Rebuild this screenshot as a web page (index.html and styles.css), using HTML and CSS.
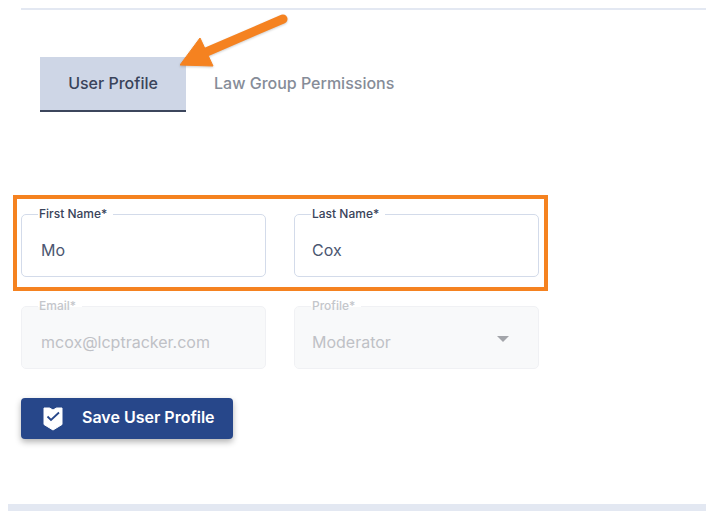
FILE: index.html
```html
<!DOCTYPE html>
<html lang="en">
<head>
  <meta charset="UTF-8" />
  <meta name="viewport" content="width=device-width, initial-scale=1.0" />
  <title>User Profile</title>
  <link rel="stylesheet" href="styles.css">
</head>
<body>
  <div class="page">
    <hr class="top-rule" />

    <nav class="tabs">
      <a class="tab active" href="#">User Profile</a>
      <a class="tab" href="#">Law Group Permissions</a>
    </nav>

    <form class="profile-form">
      <div class="form-row">
        <fieldset class="field">
          <legend>First Name*</legend>
          <input type="text" value="Mo" />
        </fieldset>
        <fieldset class="field">
          <legend>Last Name*</legend>
          <input type="text" value="Cox" />
        </fieldset>
      </div>
      <div class="form-row">
        <fieldset class="field disabled">
          <legend>Email*</legend>
          <input type="text" value="mcox@lcptracker.com" disabled />
        </fieldset>
        <fieldset class="field disabled">
          <legend>Profile*</legend>
          <div class="select-value">
            <span>Moderator</span>
            <i class="caret"></i>
          </div>
        </fieldset>
      </div>
      <button class="save-btn" type="button">
        <svg class="shield" width="20" height="24" viewBox="0 0 20 24">
          <path d="M1 1 H6.5 L10 3 L13.5 1 H19 V17.5 L10 23 L1 17.5 Z" fill="#fff" stroke="#fff" stroke-width="1" stroke-linejoin="round" />
          <path d="M4.5 9.5 L8 13 L16 5.5" fill="none" stroke="#27478a" stroke-width="1.8" />
        </svg>
        <span class="save-label">Save User Profile</span>
      </button>
    </form>

    <div class="bottom-bar"></div>

    <!-- annotations drawn on top of the screenshot -->
    <div class="highlight-box"></div>
    <svg class="arrow" width="112" height="62" viewBox="0 0 112 62">
      <path d="M103 8 L24 42" fill="none" stroke="#f58220" stroke-width="9" stroke-linecap="round" />
      <path d="M20 27 L0 54 L33 55 Z" fill="#f58220" stroke="#f58220" stroke-width="1" stroke-linejoin="round" />
    </svg>
  </div>
</body>
</html>
```

FILE: styles.css
```css
* { box-sizing: border-box; margin: 0; padding: 0; }
body { font-family: 'Inter', 'Liberation Sans', sans-serif; background-color: #fff; color: #3d4759; }

.page {
  position: relative;
  width: 717px; height: 519px;
  padding-top: 8px;
  overflow: hidden;
}
.top-rule {
  border: none; height: 2px;
  margin: 0 11px 0 21px;
  background-color: #e3e8f2;
}

.tabs {
  display: flex;
  margin: 47px 0 0 40px;
}
.tab {
  height: 55px;
  padding-bottom: 3px;
  display: flex; align-items: center;
  font-size: 16px; font-weight: 500;
  color: #868c98; text-decoration: none;
}
.tab.active {
  width: 146px; margin-right: 28px;
  padding-bottom: 1px;
  justify-content: center;
  background-color: #ced6e6;
  border-bottom: 2px solid #3c465c;
  color: #39435a;
}

.profile-form {
  display: flex; flex-direction: column;
  gap: 29px;
  margin: 102px 0 0 21px;
}
.form-row {
  display: flex; gap: 28px;
}
.field {
  width: 245px; height: 70px;
  margin-top: -7px;
  padding: 0 17px;
  border: 1.5px solid #d3dbea;
  border-radius: 5px;
  background-color: #fff;
}
.field legend {
  margin-left: -1px;
  padding: 0 6px 0 1px;
  font-size: 12px; line-height: 14px;
  font-weight: 500;
  color: #39435a;
}
.field input {
  display: block;
  width: 100%; height: 56px;
  padding: 1px 0 0 0;
  border: none; outline: none;
  background: transparent;
  font: inherit; font-size: 16px;
  color: #4b5670;
}
.field:first-child input { padding-left: 2px; }
.field.disabled {
  background-color: #f8f9fa;
  border-color: #f0f1f4;
  background-clip: padding-box;
}
.field.disabled legend { color: #c4c6cb; }
.field.disabled input { color: #bfc1c6; }

.select-value {
  height: 56px;
  padding: 1px 0 0 0;
  display: flex; align-items: center; justify-content: space-between;
  font-size: 16px;
  color: #bfc1c6;
}
.caret {
  width: 0; height: 0;
  margin: 0 12px 5px 0;
  border-left: 6px solid transparent;
  border-right: 6px solid transparent;
  border-top: 6px solid #a3a5aa;
}

.save-btn {
  width: 212px; height: 41px;
  display: flex; align-items: center;
  gap: 19px;
  padding-left: 22px;
  border: none; border-radius: 4px;
  background-color: #27478a;
  box-shadow: 0 3px 6px rgba(0,0,0,0.3);
  color: #fff;
  font: inherit; font-size: 16px; font-weight: 600;
}
.save-label { padding-bottom: 3px; }

.bottom-bar {
  position: absolute;
  left: 8px; top: 504px;
  width: 698px; height: 7px;
  background-color: #e3e8f2;
}
.highlight-box {
  position: absolute;
  left: 13px; top: 195px;
  width: 535px; height: 96px;
  border: 4px solid #f58220;
}
.arrow {
  position: absolute;
  left: 180px; top: 11px;
  filter: drop-shadow(0 1px 1px rgba(0,0,0,0.2));
}
```
